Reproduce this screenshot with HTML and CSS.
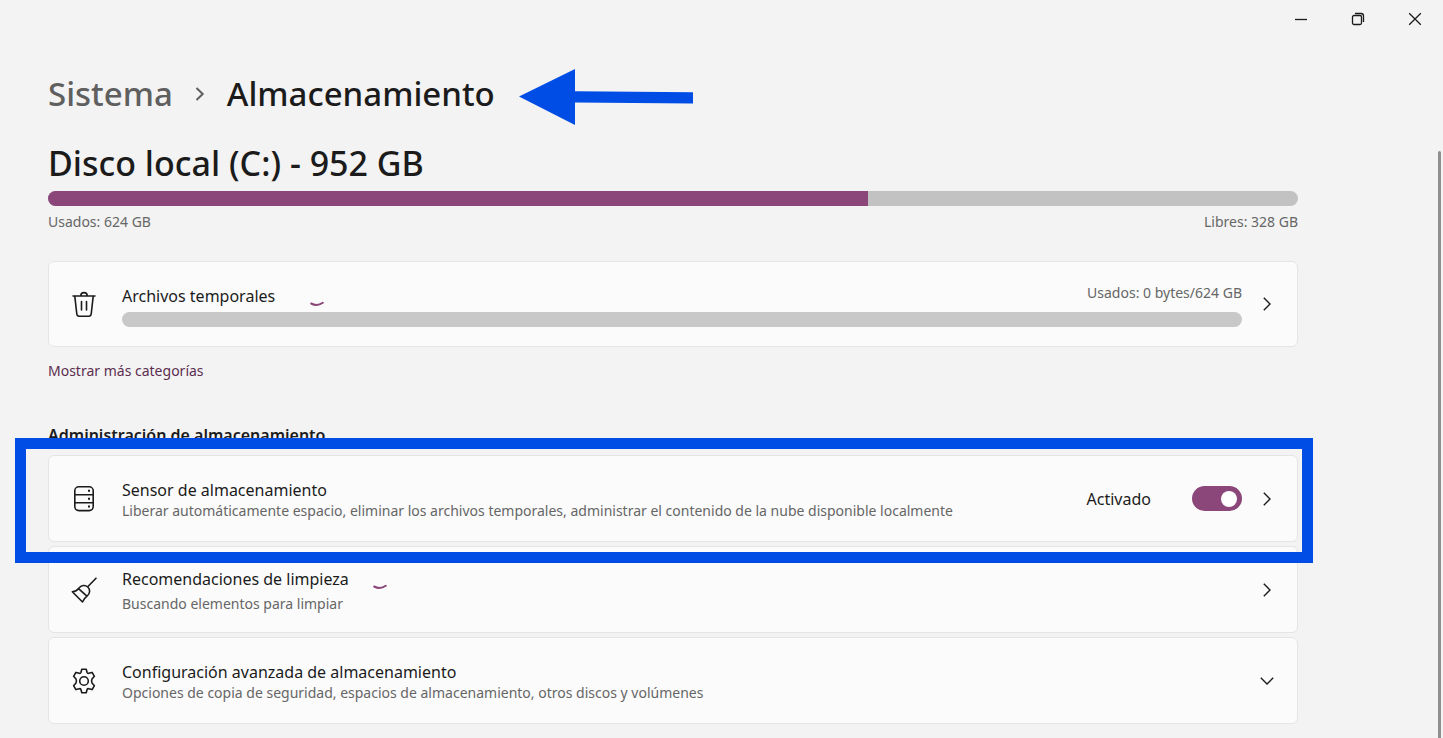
FILE: index.html
```html
<!DOCTYPE html>
<html lang="es">
<head>
    <meta charset="UTF-8">
    <meta name="viewport" content="width=device-width, initial-scale=1.0">
    <title>Almacenamiento</title>
    <link rel="stylesheet" href="styles.css">
</head>
<body>
    <header class="titlebar">
        <button type="button" class="window-btn" aria-label="Minimizar">
            <svg width="14" height="14" viewBox="0 0 14 14"><path d="M1 7.5h12"/></svg>
        </button>
        <button type="button" class="window-btn" aria-label="Restaurar">
            <svg width="14" height="14" viewBox="0 0 14 14"><rect x="1.5" y="3.5" width="9" height="9" rx="1.5"/><path d="M4 1.5h6a2.5 2.5 0 0 1 2.5 2.5v6"/></svg>
        </button>
        <button type="button" class="window-btn" aria-label="Cerrar">
            <svg width="14" height="14" viewBox="0 0 14 14"><path d="M1.2 1.2l11.6 11.6M12.8 1.2L1.2 12.8"/></svg>
        </button>
    </header>

    <main class="content">
        <nav class="breadcrumb">
            <a href="#" class="crumb">Sistema</a>
            <svg class="crumb-sep" width="10" height="16" viewBox="0 0 10 16"><path d="M1.500 2L7.700 8l-6.200 6"/></svg>
            <h1 class="title">Almacenamiento</h1>
            <svg class="arrow" width="174" height="58" viewBox="0 0 174 58"><path d="M0 28.500L56 1v22.200l118 1v11.300l-118-1V57z"/></svg>
        </nav>

        <section class="disk">
            <h2 class="disk-title">Disco local (C:) - 952 GB</h2>
            <div class="bar"><div class="bar-fill" style="width: 65.6%"></div></div>
            <div class="usage"><span>Usados: 624 GB</span><span>Libres: 328 GB</span></div>
        </section>

        <section class="card">
            <svg class="icon" width="28" height="28" viewBox="0 0 28 28"><path d="M3 6h22M10.800 5.800a3.200 3.200 0 0 1 6.400 0M4.800 6.300l2 17.700a2.500 2.500 0 0 0 2.500 2.200h9.400a2.500 2.500 0 0 0 2.500-2.200l2-17.700M11.500 11.500v8.500M16.500 11.500v8.500"/></svg>
            <div class="card-body">
                <div class="card-row">
                    <h3 class="card-title">Archivos temporales</h3>
                    <svg class="spinner spinner-wide" width="14" height="6" viewBox="0 0 14 6"><path d="M1.200 2.500q5.800 3.200 11.600-.8"/></svg>
                    <span class="card-usage">Usados: 0 bytes/624 GB</span>
                </div>
                <div class="bar bar-light"></div>
            </div>
            <button type="button" class="chevron" aria-label="Abrir archivos temporales">
                <svg width="14" height="14" viewBox="0 0 14 14"><path d="M3.800.800L10 7l-6.200 6.200"/></svg>
            </button>
        </section>

        <a href="#" class="more">Mostrar más categorías</a>

        <h2 class="section-title">Administración de almacenamiento</h2>

        <div class="cards">
            <section class="card highlighted">
                <svg class="icon" width="28" height="28" viewBox="0 0 28 28"><rect x="4.800" y="1.800" width="18.400" height="23.800" rx="4"/><path d="M4.800 9.700h18.400M4.800 17.700h18.400"/><path class="dots" d="M18 4.800h2v2h-2zM18 12.700h2v2h-2zM18 20.600h2v2h-2z"/></svg>
                <div class="card-body">
                    <h3 class="card-title">Sensor de almacenamiento</h3>
                    <p class="card-text">Liberar automáticamente espacio, eliminar los archivos temporales, administrar el contenido de la nube disponible localmente</p>
                </div>
                <label class="switch">
                    Activado
                    <input type="checkbox" class="toggle" role="switch" checked>
                </label>
                <button type="button" class="chevron" aria-label="Abrir sensor de almacenamiento">
                    <svg width="14" height="14" viewBox="0 0 14 14"><path d="M3.800.800L10 7l-6.200 6.200"/></svg>
                </button>
            </section>

            <section class="card">
                <svg class="icon" width="28" height="28" viewBox="0 0 28 28"><path d="M26 2.200l-7.800 8M2.300 15.800c3.200-.4 5-1.500 6.500-3.600 2.400-3.200 6.400-3.400 9-1.200 2.600 2.500 2.400 6.500-.6 8.800-2 1.500-3.300 3.300-4.700 6.200zM8.500 12.600l8.400 7.600"/></svg>
                <div class="card-body">
                    <div class="card-row">
                        <h3 class="card-title">Recomendaciones de limpieza</h3>
                        <svg class="spinner" width="14" height="6" viewBox="0 0 14 6"><path d="M1.200 2.500q5.800 3.200 11.600-.8"/></svg>
                    </div>
                    <p class="card-text card-status">Buscando elementos para limpiar</p>
                </div>
                <button type="button" class="chevron" aria-label="Abrir recomendaciones de limpieza">
                    <svg width="14" height="14" viewBox="0 0 14 14"><path d="M3.800.800L10 7l-6.200 6.200"/></svg>
                </button>
            </section>

            <section class="card">
                <svg class="icon" width="28" height="28" viewBox="0 0 28 28"><circle cx="14" cy="14" r="4.300"/><path d="M11.800 2.200h4.400l.9 3.300q.4 1.100 1.600.8l3.400-.9 2.300 3.900-2.400 2.700q-.9 2 0 4l2.400 2.700-2.300 3.900-3.400-.9q-1.200-.3-1.600.8l-.9 3.300h-4.400l-.9-3.300q-.4-1.100-1.600-.8l-3.400.9-2.300-3.900L6 16q.9-2 0-4L3.600 9.300l2.300-3.900 3.400.9q1.200.3 1.600-.8z"/></svg>
                <div class="card-body">
                    <h3 class="card-title">Configuración avanzada de almacenamiento</h3>
                    <p class="card-text">Opciones de copia de seguridad, espacios de almacenamiento, otros discos y volúmenes</p>
                </div>
                <button type="button" class="chevron" aria-label="Expandir configuración avanzada">
                    <svg width="14" height="14" viewBox="0 0 14 14"><path d="M.800 3.800L7 10l6.200-6.200"/></svg>
                </button>
            </section>
        </div>
    </main>

    <div class="scrollbar"></div>
</body>
</html>
```

FILE: styles.css
```css
* {
    box-sizing: border-box;
}
body {
    margin: 0;
    background: #f3f3f3;
    color: #1b1b1b;
    font-family: "Segoe UI", "Noto Sans", sans-serif;
    font-size: 16px;
}
h1, h2, h3, p {
    margin: 0;
}
a {
    text-decoration: none;
}
button {
    border: none;
    background: none;
    padding: 0;
    font: inherit;
    color: inherit;
}
svg {
    display: block;
    flex: none;
    fill: none;
    stroke: currentColor;
    stroke-width: 1.3;
}

/* window buttons */
.titlebar {
    display: flex;
    justify-content: flex-end;
    gap: 1px;
    height: 38px;
}
.window-btn {
    display: flex;
    align-items: center;
    justify-content: center;
    width: 56px;
}

.content {
    padding: 32px 145px 14px 48px;
}

/* breadcrumb */
.breadcrumb {
    display: flex;
    align-items: center;
    height: 48px;
}
.crumb,
.title {
    font-size: 33px;
    font-weight: 500;
    line-height: 46px;
    white-space: nowrap;
}
.crumb {
    color: #5f5f5f;
}
.crumb-sep {
    margin: 0 22px;
    color: #5f5f5f;
    stroke-width: 2;
}
.arrow {
    margin: 5px 0 0 24px;
    fill: #004de6;
    stroke: none;
}

/* disk usage */
.disk {
    margin-top: 22px;
}
.disk-title {
    font-size: 34px;
    font-weight: 500;
    line-height: 46px;
}
.bar {
    height: 15px;
    margin-top: 5px;
    border-radius: 8px;
    background: #c2c2c2;
    overflow: hidden;
}
.bar-fill {
    height: 100%;
    background: #8b477a;
}
.bar-light {
    margin-top: 3px;
    background: #c8c8c8;
}
.usage {
    display: flex;
    justify-content: space-between;
    margin-top: 5px;
    color: #666;
    font-size: 14px;
    line-height: 22px;
}

/* cards */
.card {
    position: relative;
    display: flex;
    align-items: center;
    min-height: 87px;
    padding: 0 18px 0 21px;
    border: 1px solid #e5e5e5;
    border-radius: 6px;
    background: #fbfbfb;
}
.disk + .card {
    min-height: 86px;
    margin-top: 28px;
}
.cards {
    display: flex;
    flex-direction: column;
    gap: 4px;
}
.icon {
    margin-right: 24px;
    stroke-width: 1.6;
    stroke-linecap: round;
    stroke-linejoin: round;
}
.dots {
    fill: currentColor;
    stroke: none;
}
.card-body {
    flex: 1;
    padding-top: 2px;
}
.card-row {
    display: flex;
    align-items: center;
}
.card-title {
    font-size: 16px;
    font-weight: 400;
    line-height: 22px;
}
.card-text,
.card-usage {
    color: #666;
    font-size: 14px;
    line-height: 20px;
}
.card-status {
    margin-top: 4px;
}
.card-usage {
    margin: 0 0 6px auto;
}
.spinner {
    margin: 16px 0 0 24px;
    color: #8b477a;
    stroke-width: 2;
    stroke-linecap: round;
}
.spinner-wide {
    margin-left: 35px;
}
.chevron {
    display: flex;
    align-items: center;
    justify-content: center;
    width: 24px;
    height: 32px;
    margin-left: 13px;
}
.chevron svg {
    stroke-width: 1.4;
}
.switch {
    display: flex;
    align-items: center;
    gap: 41px;
}
.toggle {
    appearance: none;
    width: 50px;
    height: 25px;
    margin: 0;
    padding: 4px 5px;
    border-radius: 13px;
    background: #8b477a;
    display: flex;
    align-items: center;
    justify-content: flex-end;
}
.toggle::before {
    content: "";
    width: 16px;
    height: 16px;
    border-radius: 50%;
    background: #fff;
}
.toggle:not(:checked) {
    justify-content: flex-start;
    background: #8a8a8a;
}

.more {
    display: block;
    margin-top: 13px;
    color: #5c2e50;
    font-size: 14px;
    line-height: 22px;
}
.section-title {
    margin: 42px 0 9px;
    font-size: 16px;
    font-weight: 600;
    line-height: 22px;
}

/* frame drawn around the storage sense card */
.highlighted::after {
    content: "";
    position: absolute;
    z-index: 1;
    inset: -18px -16px -22px -34px;
    border: 11px solid #004de6;
    pointer-events: none;
}

.scrollbar {
    position: fixed;
    top: 151px;
    right: 2px;
    bottom: 0;
    width: 3px;
    border-radius: 2px 2px 0 0;
    background: #8f8f8f;
}
```
